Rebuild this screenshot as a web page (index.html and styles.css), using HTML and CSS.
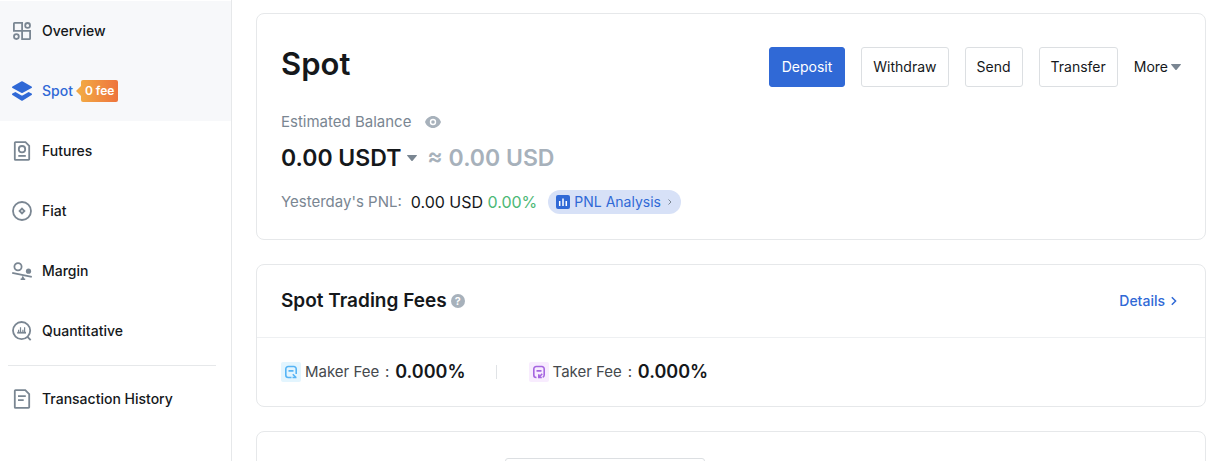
FILE: index.html
```html
<!DOCTYPE html>
<html lang="en">
<head>
    <meta charset="UTF-8">
    <meta name="viewport" content="width=device-width, initial-scale=1.0">
    <title>Spot</title>
    <link rel="stylesheet" href="styles.css">
</head>
<body>
    <aside class="sidebar">
        <nav>
            <a href="#" class="nav-item shaded">
                <svg class="nav-icon" viewBox="0 0 20 20"><path d="M2.6 1.9h7.5v8H1.9V2.6a.7.7 0 0 1 .7-.7zM10.1 9.9h8v7.5a.7.7 0 0 1-.7.7h-7.3z"/><circle cx="15.6" cy="4.4" r="2.4"/><circle cx="4.4" cy="15.6" r="2.4"/></svg>
                <span>Overview</span>
            </a>
            <a href="#" class="nav-item shaded active">
                <svg class="nav-icon solid" viewBox="0 0 20 20"><path d="M9.2.4a1.5 1.5 0 0 1 1.6 0l8.7 5.2c.7.4.7 1.1 0 1.5l-8.7 4.7a1.5 1.5 0 0 1-1.6 0L.5 7.1c-.7-.4-.7-1.1 0-1.5z"/><path d="M.4 12.5 3.4 11.1l5.6 3.2a2 2 0 0 0 2 0l5.6-3.2 3 1.4c.6.4.6 1 0 1.4l-8.800 5.6a1.5 1.5 0 0 1-1.6 0L.4 13.9c-.6-.4-.6-1 0-1.4z"/></svg>
                <span>Spot</span>
                <span class="tag">0 fee</span>
            </a>
            <a href="#" class="nav-item">
                <svg class="nav-icon" viewBox="0 0 20 20"><path d="M3.5 1.1h10l3.700 3.700v13.400a.7.7 0 0 1-.7.7h-13a.7.7 0 0 1-.7-.7V1.8a.7.7 0 0 1 .7-.7z"/><circle cx="10" cy="8.2" r="3.2"/><path d="M6.3 14.9h7.5"/></svg>
                <span>Futures</span>
            </a>
            <a href="#" class="nav-item">
                <svg class="nav-icon" viewBox="0 0 20 20"><circle cx="10" cy="10" r="9"/><path d="m10 7.6 2.4 2.4-2.4 2.4L7.6 10z"/></svg>
                <span>Fiat</span>
            </a>
            <a href="#" class="nav-item">
                <svg class="nav-icon" viewBox="0 0 20 20"><circle cx="6" cy="5.7" r="3.6"/><path d="m.2 11.9 19.6 4"/><circle class="fill" cx="16.5" cy="10.2" r="2.6"/><path class="fill" d="m10.8 14.5 1.5 3h.9v1.6H8.6v-1.6h.8z"/></svg>
                <span>Margin</span>
            </a>
            <a href="#" class="nav-item">
                <svg class="nav-icon" viewBox="0 0 20 20"><circle cx="9.6" cy="9.6" r="8.6"/><path d="m15.5 15.8 3.2 3.4"/><path d="M5.200 11.700h8.800"/><path class="thin" d="M6.600 11V8.800M8.500 11V6.300M10.900 11V8.800M12.600 11V6.300"/></svg>
                <span>Quantitative</span>
            </a>
        </nav>
        <hr class="nav-divider">
        <a href="#" class="nav-item">
            <svg class="nav-icon" viewBox="0 0 20 20"><path d="M3.5 1.1h9.8l3.9 4v13.1a.7.7 0 0 1-.7.7h-13a.7.7 0 0 1-.7-.7V1.8a.7.7 0 0 1 .7-.7zM6 7.2h7.8M6 11.1h5.7"/></svg>
            <span>Transaction History</span>
        </a>
    </aside>

    <main class="content">
        <section class="card balance">
            <div class="balance-head">
                <h1>Spot</h1>
                <div class="actions">
                    <button type="button" class="btn primary">Deposit</button>
                    <button type="button" class="btn">Withdraw</button>
                    <button type="button" class="btn">Send</button>
                    <button type="button" class="btn">Transfer</button>
                    <button type="button" class="more">More <svg class="caret" viewBox="0 0 10 6"><path d="M.5 0h9a.5.5 0 0 1 .3.8L5.6 5.7a.8.8 0 0 1-1.2 0L.2.8A.5.5 0 0 1 .5 0z"/></svg></button>
                </div>
            </div>
            <div class="estimated">
                <span>Estimated Balance</span>
                <button type="button" class="icon-btn" aria-label="Hide balance"><svg class="eye" viewBox="0 0 16 12"><path fill-rule="evenodd" d="M8 0c3.7 0 6.7 2.5 8 6-1.3 3.5-4.3 6-8 6S1.3 9.5 0 6c1.3-3.5 4.3-6 8-6zm0 2.8a3.2 3.2 0 1 0 0 6.4 3.2 3.2 0 0 0 0-6.400z"/><circle cx="8" cy="6" r="1.800"/></svg></button>
            </div>
            <div class="amount">
                <button type="button" class="currency">0.00 USDT <svg class="caret" viewBox="0 0 10 6"><path d="M.5 0h9a.5.5 0 0 1 .3.8L5.6 5.7a.8.8 0 0 1-1.2 0L.2.8A.5.5 0 0 1 .5 0z"/></svg></button>
                <span class="approx">≈ 0.00 USD</span>
            </div>
            <div class="pnl">
                <span class="muted">Yesterday's PNL:</span>
                <span class="pnl-value">0.00 USD <span class="up">0.00%</span></span>
                <a href="#" class="pnl-link">
                    <svg class="chart" viewBox="0 0 14 14"><rect width="14" height="14" rx="2"/><path d="M3.7 6v5M7 3.5V11M10.3 6v5"/></svg>
                    <span>PNL Analysis</span>
                    <svg class="arrow" viewBox="0 0 6 8"><path d="m1.500 1.500 2.500 2.500-2.500 2.500"/></svg>
                </a>
            </div>
        </section>

        <section class="card">
            <div class="fees-head">
                <h2>Spot Trading Fees</h2>
                <span class="help">?</span>
                <a href="#" class="details">Details <svg class="arrow" viewBox="0 0 6 10"><path d="m.8 1.2 3.8 3.8L.8 8.8"/></svg></a>
            </div>
            <div class="fees">
                <div class="fee">
                    <svg class="fee-icon maker" viewBox="0 0 20 20"><rect width="20" height="20" rx="2"/><path d="M10.5 15.5H7.2a2.4 2.4 0 0 1-2.4-2.4V6.9a2.4 2.4 0 0 1 2.4-2.4h5.6a2.4 2.4 0 0 1 2.4 2.4v5M7.5 8.9h5M11.8 12.2l3 3M11.5 15.5h4"/></svg>
                    <span>Maker Fee</span>
                    <span class="colon">:</span>
                    <strong>0.000%</strong>
                </div>
                <div class="fee">
                    <svg class="fee-icon taker" viewBox="0 0 20 20"><rect width="20" height="20" rx="2"/><path d="M7.5 15.5h-.3a2.4 2.4 0 0 1-2.4-2.4V6.9a2.4 2.4 0 0 1 2.4-2.4h5.6a2.4 2.4 0 0 1 2.4 2.4v6.2a2.4 2.4 0 0 1-1.500 2.2M7.5 8.9h5M13.2 11.8l-3.2 3.5M9.8 12.3v3.200h3"/></svg>
                    <span>Taker Fee</span>
                    <span class="colon">:</span>
                    <strong>0.000%</strong>
                </div>
            </div>
        </section>

        <section class="card assets">
            <input type="search" class="search" aria-label="Search coin">
        </section>
    </main>
</body>
</html>
```
FILE: styles.css
```css
* {
    box-sizing: border-box;
}
body {
    margin: 0;
    height: 100vh;
    overflow: hidden;
    display: flex;
    background-color: #fff;
    color: #15181b;
    font-family: Inter, "Liberation Sans", sans-serif;
    font-size: 14px;
    line-height: 20px;
}
a {
    text-decoration: none;
    color: inherit;
}
button {
    padding: 0;
    border: 0;
    background: none;
    font: inherit;
    color: inherit;
    cursor: pointer;
}
svg {
    flex-shrink: 0;
}

/* sidebar */
.sidebar {
    flex: 0 0 232px;
    padding-top: 1px;
    border-right: 1px solid #e6e8ea;
}
.nav-item {
    display: flex;
    align-items: center;
    height: 60px;
    padding-left: 12px;
    font-weight: 500;
}
.nav-item.shaded {
    background-color: #f7f8fa;
}
.nav-item.active {
    color: #3069d6;
}
.nav-icon {
    width: 20px;
    height: 20px;
    margin-right: 10px;
    fill: none;
    stroke: #7a8692;
    stroke-width: 1.8;
}
.nav-icon .fill {
    fill: #7a8692;
    stroke: none;
}
.nav-icon .thin {
    stroke-width: 1.2;
}
.nav-icon.solid {
    fill: #3069d6;
    stroke: none;
}
.tag {
    position: relative;
    margin-left: 8px;
    padding: 0 4px;
    border-radius: 2px;
    background: linear-gradient(90deg, #f2a844, #ee743d);
    color: #fff;
    font-size: 12px;
    font-weight: 600;
    line-height: 22px;
}
.tag::before {
    content: "";
    position: absolute;
    top: 6px;
    left: -5px;
    border: 5px solid transparent;
    border-left: 0;
    border-right-color: #f2a844;
}
.nav-divider {
    margin: 4px 15px 3px 8px;
    border: 0;
    border-top: 1px solid #e6e8ea;
}

/* cards */
.content {
    flex: 1;
    display: flex;
    flex-direction: column;
    gap: 24px;
    min-width: 0;
    padding: 13px 1px 0 24px;
}
.card {
    flex-shrink: 0;
    border: 1px solid #e6e8ea;
    border-radius: 8px;
}
.balance {
    padding: 30px 24px 25px;
}
.balance-head {
    display: flex;
    justify-content: space-between;
    align-items: flex-start;
}
h1 {
    margin: 0;
    font-size: 31px;
    font-weight: 600;
    line-height: 40px;
}
.actions {
    display: flex;
    align-items: center;
    gap: 16px;
    padding-top: 3px;
}
.btn {
    height: 40px;
    padding: 0 11px;
    border: 1px solid #dcdfe2;
    border-radius: 3px;
}
.btn.primary {
    padding: 0 12px;
    border-color: #3069d6;
    background-color: #3069d6;
    color: #fff;
}
.more {
    display: flex;
    align-items: center;
    gap: 3px;
}
.caret {
    width: 10px;
    height: 6px;
    fill: #7a8692;
}
.estimated {
    display: flex;
    align-items: center;
    gap: 14px;
    margin-top: 23px;
    color: #7a8692;
    font-size: 15px;
    line-height: 24px;
}
.icon-btn {
    display: flex;
}
.eye {
    width: 16px;
    height: 12px;
    fill: #a7b1bb;
}
.amount {
    display: flex;
    align-items: center;
    gap: 10px;
    margin-top: 8px;
    font-size: 23px;
    font-weight: 600;
    line-height: 32px;
}
.currency {
    display: flex;
    align-items: center;
    gap: 6px;
}
.approx {
    color: #a7b1bb;
}
.pnl {
    display: flex;
    align-items: center;
    margin-top: 16px;
    font-size: 16px;
    line-height: 24px;
}
.muted {
    margin-right: 9px;
    color: #7a8692;
    font-size: 15px;
}
.up {
    color: #4cb876;
}
.pnl-link {
    display: flex;
    align-items: center;
    margin-left: 11px;
    padding: 0 8px;
    border-radius: 12px;
    background-color: #d7e1f7;
    color: #3069d6;
    font-size: 14px;
}
.chart {
    width: 14px;
    height: 14px;
    margin-right: 4px;
    fill: #3069d6;
    stroke: #fff;
    stroke-width: 1.5;
}
.chart rect {
    stroke: none;
}
.arrow {
    fill: none;
    stroke: currentColor;
}
.pnl-link .arrow {
    width: 6px;
    height: 8px;
    margin-left: 6px;
    color: #7a8692;
}

/* fees */
.fees-head {
    display: flex;
    align-items: center;
    padding: 24px 28px 24px 24px;
    border-bottom: 1px solid #eef0f2;
}
h2 {
    margin: 0;
    font-size: 19px;
    font-weight: 600;
    line-height: 24px;
}
.help {
    width: 14px;
    height: 14px;
    margin-left: 4px;
    border-radius: 50%;
    background-color: #a7b1bb;
    color: #fff;
    font-size: 11px;
    font-weight: 600;
    line-height: 14px;
    text-align: center;
}
.details {
    display: flex;
    align-items: center;
    gap: 6px;
    margin-left: auto;
    color: #3069d6;
    font-weight: 500;
}
.details .arrow {
    width: 6px;
    height: 10px;
    stroke-width: 1.5;
}
.fees {
    display: flex;
    padding: 22px 24px;
}
.fee {
    display: flex;
    align-items: center;
    color: #45494d;
    font-size: 15px;
    line-height: 24px;
}
.fee + .fee::before {
    content: "";
    width: 1px;
    height: 14px;
    margin: 0 32px 0 30px;
    background-color: #e0e3e6;
}
.fee-icon {
    width: 20px;
    height: 20px;
    margin-right: 4px;
    fill: none;
    stroke-width: 1.6;
}
.maker {
    stroke: #56b4f5;
}
.maker rect {
    fill: #e3f5fe;
    stroke: none;
}
.taker {
    stroke: #a565e0;
}
.taker rect {
    fill: #f8ecfe;
    stroke: none;
}
.colon {
    width: 16px;
    text-align: center;
}
.fee strong {
    color: #15181b;
    font-size: 18px;
    font-weight: 600;
}
.assets {
    padding: 26px 24px;
}
.search {
    display: block;
    width: 200px;
    height: 32px;
    margin-left: 224px;
    border: 1px solid #dcdfe2;
    border-radius: 3px;
    background-color: #fff;
}
```
